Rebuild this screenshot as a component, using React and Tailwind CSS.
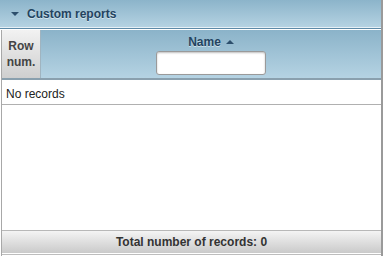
import React from 'react';

const font = { fontFamily: '"Liberation Sans", Arial, sans-serif' };

const App = () => {
  return (
    <div className="w-[383px] h-[257px] bg-white relative overflow-hidden" style={font}>
      {/* panel title */}
      <div className="h-[27px] flex items-center bg-gradient-to-b from-[#8cb4ca] to-[#b4d2e2] border-r-2 border-[#9a9a9a]">
        <span className="ml-[11px] mr-[8px] w-0 h-0 border-l-[4px] border-r-[4px] border-t-[4px] border-l-transparent border-r-transparent border-t-[#2d4f6c]" />
        <span className="text-[12px] font-bold text-[#23435f] [text-shadow:0_1px_0_rgba(255,255,255,0.5)]">Custom reports</span>
      </div>
      <div className="h-[1px] bg-[#e6f0f6] border-r-2 border-[#9a9a9a]" />
      <div className="h-[1px] bg-[#5d8aa8] border-r-2 border-[#9a9a9a]" />
      <div className="h-[1px] bg-white border-r-2 border-[#9a9a9a]" />
      <div className="h-[1px] bg-[#7fa6be] ml-[40px] border-r-2 border-[#9a9a9a]" />

      {/* grid */}
      <div className="flex flex-col h-[226px] border-l border-r-2 border-l-[#a8a8a8] border-r-[#9a9a9a] ml-[1px] -mt-[1px]">
        <div className="flex h-[50px] border-b-2 border-[#8aa0ae]">
          <div className="w-[39px] flex items-center justify-center text-center text-[12px] font-bold leading-[16px] text-[#444] bg-gradient-to-b from-[#f2f2f2] to-[#cfcfcf] border-r border-[#a0b4c0]">
            Row<br />num.
          </div>
          <div className="flex-1 flex flex-col items-center pt-[5px] bg-gradient-to-b from-[#8bb3c9] to-[#b5d3e3]">
            <div className="flex items-center gap-[5px] text-[12px] leading-[14px] font-bold text-[#23435f] [text-shadow:0_1px_0_rgba(255,255,255,0.5)]">
              Name
              <span className="w-0 h-0 border-l-[4px] border-r-[4px] border-b-[4px] border-l-transparent border-r-transparent border-b-[#2d4f6c]" />
            </div>
            <div className="mt-[2px] w-[110px] h-[24px] bg-white rounded-[3px] border border-[#9a9a9a] shadow-[inset_0_1px_2px_rgba(0,0,0,0.25)]" />
          </div>
        </div>
        <div className="h-[25px] pl-[4px] pt-[7px] text-[12px] leading-[14px] text-[#222] border-b border-[#b0b0b0]">
          No records
        </div>
        <div className="flex-1" />
        <div className="h-[23px] flex items-center justify-center text-[12px] font-bold text-[#333] bg-gradient-to-b from-[#f4f4f4] to-[#cacaca] border-t border-[#b8b8b8]">
          Total number of records: 0
        </div>
        <div className="h-[1px] bg-white" />
        <div className="h-[1px] bg-[#bdbdbd]" />
        <div className="h-[1px] bg-white" />
      </div>
    </div>
  );
};

export default App;
